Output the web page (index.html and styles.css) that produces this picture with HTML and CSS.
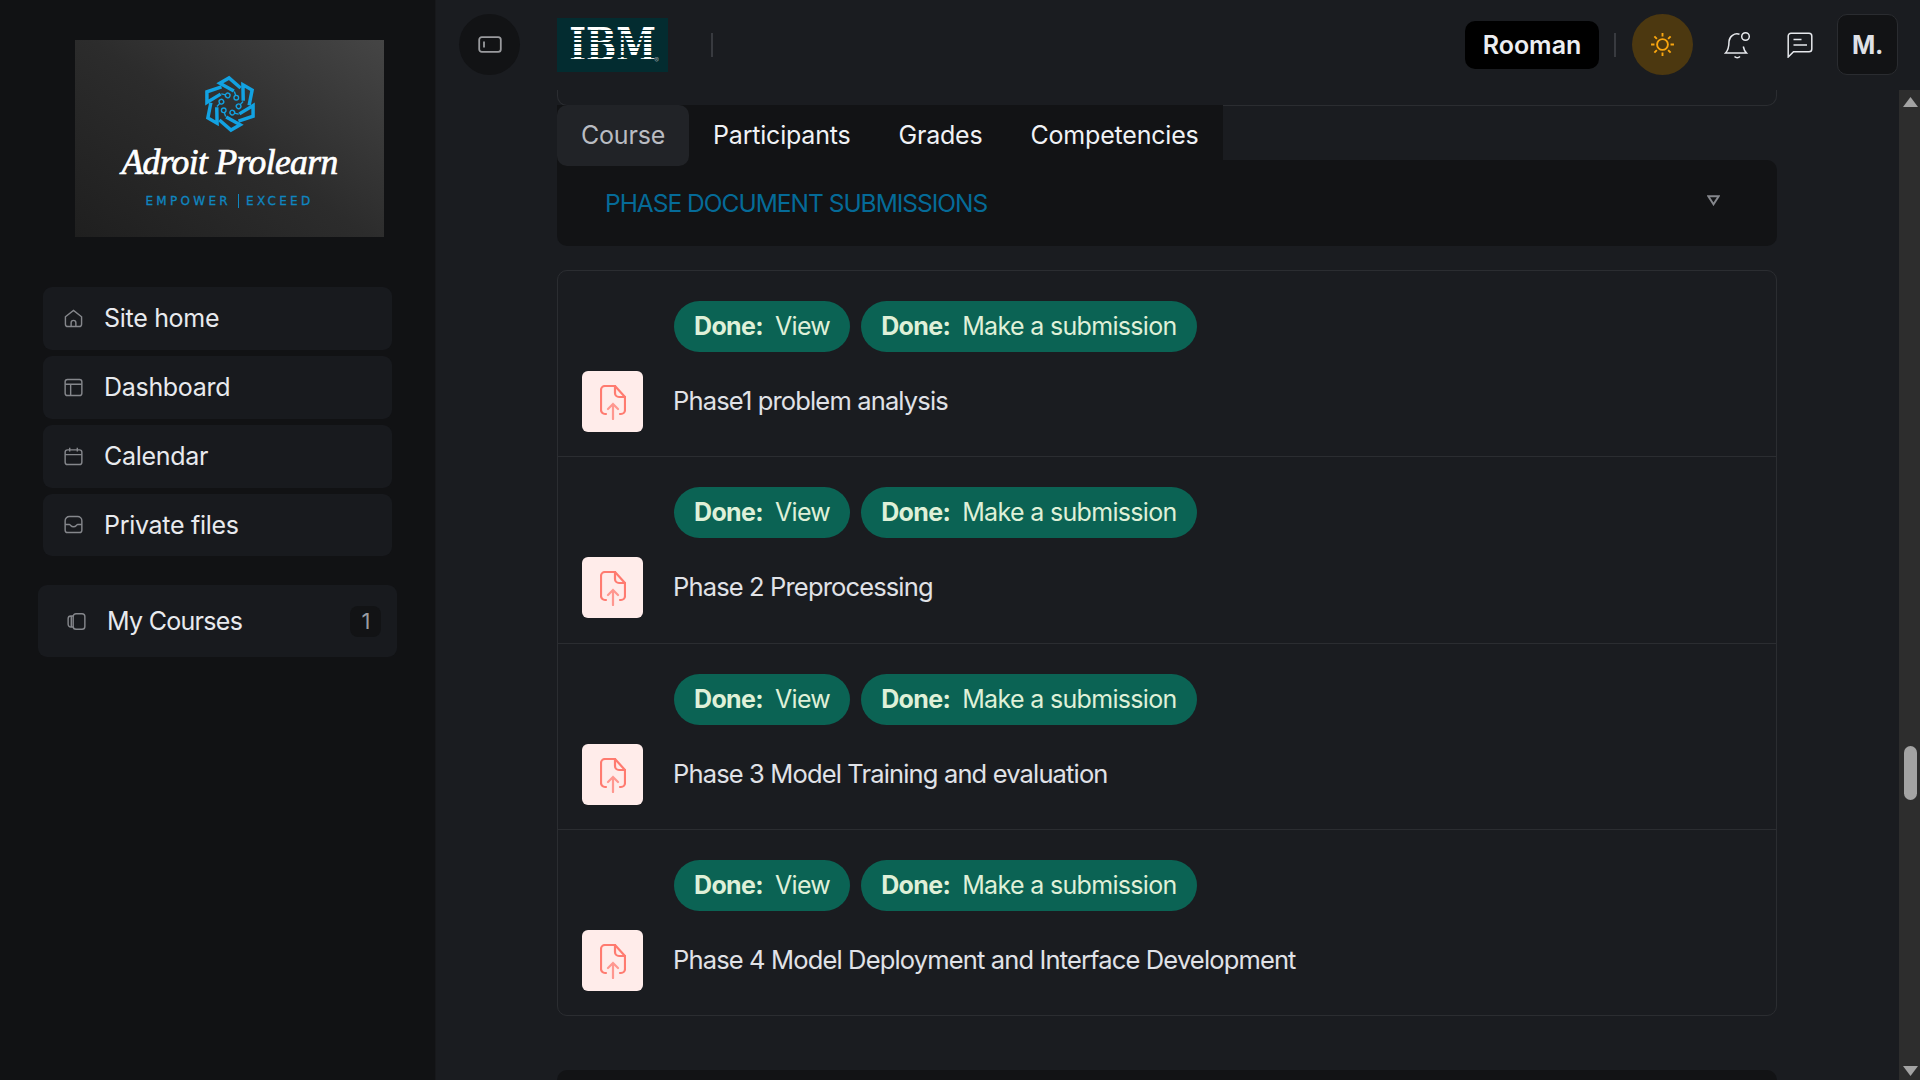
FILE: index.html
```html
<!DOCTYPE html>
<html lang="en">
<head>
<meta charset="utf-8">
<title>Course</title>
<link rel="stylesheet" href="styles.css">
</head>
<body>
<svg class="sprites" width="0" height="0">
  <defs>
    <g id="arm">
      <path d="M11 -16.500 L-1 -27 L-10.500 -21.500 L4 -13.500" />
      <path d="M4.500 -13 L6 -8.500" class="thin"/>
      <circle cx="6.500" cy="-6.500" r="2.400" class="thin"/>
    </g>
    <symbol id="upload" viewBox="0 0 26 35">
      <path d="M6 29H5a4 4 0 0 1-4-4V5a4 4 0 0 1 4-4h10l10 11v13a4 4 0 0 1-4 4h-1" />
      <path d="M15 1v7a4 4 0 0 0 4 4h6" />
      <path d="M13 34V19M8 24l5-5 5 5" stroke-opacity=".75"/>
    </symbol>
  </defs>
</svg>
<aside class="sidebar">
  <div class="brand">
    <svg class="brand-mark" viewBox="-30 -30 60 60" aria-hidden="true">
      <use href="#arm"/>
      <use href="#arm" transform="rotate(60)"/>
      <use href="#arm" transform="rotate(120)"/>
      <use href="#arm" transform="rotate(180)"/>
      <use href="#arm" transform="rotate(240)"/>
      <use href="#arm" transform="rotate(300)"/>
    </svg>
    <div class="brand-name">Adroit Prolearn</div>
    <div class="brand-tag"><span>EMPOWER</span><i></i><span>EXCEED</span></div>
  </div>
  <nav class="nav">
    <a class="nav-item">
      <svg class="nav-icon" viewBox="0 0 20 20"><path d="M1.500 8.200 10 1.500l8.500 6.700V16a2.500 2.500 0 0 1-2.500 2.500H4A2.500 2.500 0 0 1 1.500 16z"/><path d="M7.500 18.500v-4a2.500 2.500 0 0 1 5 0v4"/></svg>
      <span>Site home</span>
    </a>
    <a class="nav-item">
      <svg class="nav-icon" viewBox="0 0 20 20"><rect x="1.200" y="1.500" width="17.600" height="17" rx="2.500"/><path d="M1.200 6.500h17.600M7 6.500v12"/></svg>
      <span>Dashboard</span>
    </a>
    <a class="nav-item">
      <svg class="nav-icon" viewBox="0 0 20 20"><rect x="1.200" y="3" width="17.600" height="15.500" rx="2.500"/><path d="M1.200 8h17.600M6 .8v4M14 .8v4"/></svg>
      <span>Calendar</span>
    </a>
    <a class="nav-item">
      <svg class="nav-icon" viewBox="0 0 20 20"><path d="M1.200 10V6a4.500 4.500 0 0 1 4.500-4.500h8.600A4.500 4.500 0 0 1 18.800 6v10a2.500 2.500 0 0 1-2.500 2.500H3.700A2.500 2.500 0 0 1 1.200 16z"/><path d="M1.200 10h4.300c.8 0 1 .5 1.500 1 .8.900 1.800 1.400 3 1.400s2.200-.5 3-1.400c.5-.5.7-1 1.500-1h4.300"/></svg>
      <span>Private files</span>
    </a>
  </nav>
  <a class="courses">
    <svg class="nav-icon" viewBox="0 0 20 20"><rect x="6.500" y="1.800" width="12.300" height="16.400" rx="3"/><path d="M6.500 4.200H4A2.800 2.800 0 0 0 1.200 7v6A2.800 2.800 0 0 0 4 15.800h2.500M4.500 4.500v11"/></svg>
    <span class="courses-label">My Courses</span>
    <span class="badge">1</span>
  </a>
</aside>

<div class="shell">
  <header class="topbar">
    <button class="round-btn">
      <svg class="toggle-icon" viewBox="0 0 24 17"><rect x="1.200" y="1.200" width="21.600" height="14.600" rx="2.600"/><path d="M6 5.500v6"/></svg>
    </button>
    <div class="ibm"><span class="ibm-word">IBM</span><span class="ibm-reg">®</span></div>
    <span class="rule rule-a"></span>
    <div class="spacer"></div>
    <button class="user-btn">Rooman</button>
    <span class="rule rule-b"></span>
    <button class="round-btn sun-btn">
      <svg class="sun-icon" viewBox="0 0 24 24"><circle cx="12" cy="12" r="5.200"/><path d="M12 1v3.300M12 19.700V23M1 12h3.300M19.700 12H23M4.200 4.200l2.400 2.400M17.400 17.400l2.400 2.400M4.200 19.800l2.400-2.400M17.400 6.600l2.400-2.400"/></svg>
    </button>
    <svg class="bell-icon" viewBox="0 0 27 28"><path d="M15.500 3.300A8 8 0 0 0 5 10.500c0 6-1 9-3.500 11.500h21c-1.700-1.800-2.700-3.700-3.200-6.500"/><path d="M10.500 25.500c1.500 1.600 4 1.600 5.500 0"/><circle cx="21.500" cy="5.500" r="3.800"/></svg>
    <svg class="chat-icon" viewBox="0 0 26 26"><path d="M1.200 25V4A2.800 2.800 0 0 1 4 1.200h18A2.800 2.800 0 0 1 24.800 4v13a2.800 2.800 0 0 1-2.800 2.800H6.500z"/><path d="M6.500 7.500h8M6.500 13h13.500"/></svg>
    <button class="avatar">M.</button>
  </header>

  <div class="below">
    <main class="main">
      <div class="stub"></div>
      <div class="tabs">
        <a class="tab tab-active">Course</a>
        <a class="tab">Participants</a>
        <a class="tab">Grades</a>
        <a class="tab">Competencies</a>
      </div>
      <section class="section-bar">
        <h3 class="section-title">PHASE DOCUMENT SUBMISSIONS</h3>
        <svg class="section-caret" viewBox="0 0 12 10"><path d="M1.200 1h9.600L6 8.500z"/></svg>
      </section>
      <ul class="activities">
        <li class="activity">
          <div class="pills">
            <span class="pill"><b>Done:</b><span>View</span></span>
            <span class="pill"><b>Done:</b><span>Make a submission</span></span>
          </div>
          <div class="activity-main">
            <span class="file-tile"><svg class="file-icon"><use href="#upload"/></svg></span>
            <span class="activity-name">Phase1 problem analysis</span>
          </div>
        </li>
        <li class="activity">
          <div class="pills">
            <span class="pill"><b>Done:</b><span>View</span></span>
            <span class="pill"><b>Done:</b><span>Make a submission</span></span>
          </div>
          <div class="activity-main">
            <span class="file-tile"><svg class="file-icon"><use href="#upload"/></svg></span>
            <span class="activity-name">Phase 2 Preprocessing</span>
          </div>
        </li>
        <li class="activity">
          <div class="pills">
            <span class="pill"><b>Done:</b><span>View</span></span>
            <span class="pill"><b>Done:</b><span>Make a submission</span></span>
          </div>
          <div class="activity-main">
            <span class="file-tile"><svg class="file-icon"><use href="#upload"/></svg></span>
            <span class="activity-name">Phase 3 Model Training and evaluation</span>
          </div>
        </li>
        <li class="activity">
          <div class="pills">
            <span class="pill"><b>Done:</b><span>View</span></span>
            <span class="pill"><b>Done:</b><span>Make a submission</span></span>
          </div>
          <div class="activity-main">
            <span class="file-tile"><svg class="file-icon"><use href="#upload"/></svg></span>
            <span class="activity-name">Phase 4 Model Deployment and Interface Development</span>
          </div>
        </li>
      </ul>
      <div class="next-section"></div>
    </main>
    <div class="scrollbar">
      <svg class="arrow" viewBox="0 0 15 10"><path d="M7.500 0 15 10H0z"/></svg>
      <div class="thumb"></div>
      <svg class="arrow arrow-down" viewBox="0 0 15 10"><path d="M0 0h15L7.500 10z"/></svg>
    </div>
  </div>
</div>
</body>
</html>
```
FILE: styles.css
```css
* { box-sizing: border-box; }
html, body { height: 100%; }
body {
  margin: 0;
  display: flex;
  height: 1080px;
  overflow: hidden;
  background: #1a1c20;
  color: #e6e8ec;
  font-family: Inter, "Noto Sans", sans-serif;
  font-size: 25px;
  letter-spacing: -0.3px;
}
.sprites { display: block; width: 0; height: 0; }
#arm, #arm * { fill: none; stroke: #12a2e2; stroke-width: 3.600; stroke-linejoin: miter; }
.thin { stroke-width: 1.400 !important; }

/* sidebar */
.sidebar {
  width: 436px;
  flex: none;
  background: #111214;
  border-right: 1px solid #17181b;
  padding: 40px 38px 0;
  display: flex;
  flex-direction: column;
}
.brand {
  width: 309px;
  height: 197px;
  margin-left: 37px;
  background: linear-gradient(35deg, #1f1f1f 0%, #2c2c2c 50%, #454545 100%);
  display: flex;
  flex-direction: column;
  align-items: center;
  padding-top: 34px;
}
.brand-mark { width: 58px; height: 60px; display: block; margin-left: 1px; }
.brand-name {
  font-family: "Liberation Serif", serif;
  font-style: italic;
  font-size: 35.500px;
  line-height: 44px;
  letter-spacing: -0.6px;
  color: #fff;
  -webkit-text-stroke: 0.7px #fff;
  margin-top: 6px;
  white-space: nowrap;
}
.brand-tag {
  display: flex;
  align-items: center;
  gap: 7px;
  margin-top: 10px;
  font-family: "DejaVu Sans", sans-serif;
  font-size: 12px;
  font-weight: 400;
  -webkit-text-stroke: 0.3px #0f86c0;
  letter-spacing: 3.300px;
  color: #0f86c0;
  line-height: 14px;
}
.brand-tag i { width: 1px; height: 14px; background: #0f86c0; }
.nav {
  margin: 50px 5px 0;
  display: flex;
  flex-direction: column;
  gap: 6px;
}
.nav-item {
  height: 63px;
  background: #181a1e;
  border-radius: 9px;
  display: flex;
  align-items: center;
  padding: 0 0 1px 21px;
  gap: 21px;
  color: #e8eaee;
}
.nav-item:last-child { height: 62px; }
.nav-icon {
  width: 19px;
  height: 19px;
  flex: none;
  fill: none;
  stroke: #85878c;
  stroke-width: 1.500;
}
.courses {
  height: 72px;
  margin-top: 29px;
  background: #181a1e;
  border-radius: 9px;
  display: flex;
  align-items: center;
  padding: 0 16px 0 29px;
  gap: 21px;
  color: #e8eaee;
  letter-spacing: -0.7px;
}
.courses-label { flex: 1; }
.badge {
  width: 31px;
  height: 31px;
  border-radius: 8px;
  background: #121315;
  color: #9a9ca1;
  display: flex;
  align-items: center;
  justify-content: center;
  font-size: 22px;
}

/* top bar */
.shell { flex: 1; min-width: 0; display: flex; flex-direction: column; }
.topbar {
  height: 90px;
  flex: none;
  display: flex;
  align-items: center;
  padding: 0 22px 1px 23px;
}
button { font: inherit; border: 0; padding: 0; color: inherit; letter-spacing: inherit; }
.round-btn {
  width: 61px;
  height: 61px;
  border-radius: 50%;
  background: #121315;
  display: flex;
  align-items: center;
  justify-content: center;
  flex: none;
}
.toggle-icon { width: 24px; height: 17px; fill: none; stroke: #9a9b9e; stroke-width: 1.800; }
.ibm {
  width: 111px;
  height: 54px;
  margin-left: 37px;
  background: #032c30;
  display: flex;
  align-items: center;
  justify-content: center;
  position: relative;
}
.ibm-word {
  font-family: "DejaVu Serif", serif;
  font-weight: 700;
  font-size: 46px;
  letter-spacing: 0;
  line-height: 36px;
  color: #fff;
  display: block;
  position: relative;
  transform: scaleX(.78);
}
.ibm-word::after {
  content: "";
  position: absolute;
  inset: 0;
  background: repeating-linear-gradient(to bottom, transparent 0 2.600px, #032c30 2.600px 4.250px);
}
.ibm-reg {
  position: absolute;
  right: 9px;
  bottom: 7px;
  font-size: 7px;
  line-height: 8px;
  letter-spacing: 0;
  color: #8a9a9c;
}
.rule { width: 2px; height: 24px; background: #383a3f; flex: none; }
.rule-a { margin-left: 43px; }
.spacer { flex: 1; }
.user-btn {
  width: 134px;
  height: 48px;
  background: #000;
  border-radius: 10px;
  font-weight: 600;
  color: #eceef2;
  letter-spacing: 0;
}
.rule-b { margin: 0 16px 0 15px; }
.sun-btn { background: #4c3810; }
.sun-icon { width: 25px; height: 25px; fill: none; stroke: #f9a60f; stroke-width: 1.800; }
.bell-icon { width: 27px; height: 28px; margin-left: 31px; fill: none; stroke: #e6e8ec; stroke-width: 1.500; flex: none; }
.chat-icon { width: 26px; height: 26px; margin-left: 36px; fill: none; stroke: #e6e8ec; stroke-width: 1.500; flex: none; }
.avatar {
  width: 61px;
  height: 61px;
  margin-left: 24px;
  border-radius: 10px;
  background: #121315;
  border: 1px solid #2a2c30;
  font-weight: 700;
  font-size: 25px;
  color: #dfe1e6;
}

/* main */
.below { flex: 1; min-height: 0; display: flex; }
.main {
  flex: 1;
  min-width: 0;
  padding: 0 122px 0 121px;
  overflow: hidden;
}
.stub {
  height: 16px;
  border: 1px solid #2b2d31;
  border-top: 0;
  border-radius: 0 0 10px 10px;
}
.tabs {
  display: flex;
  width: 666px;
  height: 61px;
  margin-top: -1px;
  margin-bottom: -6px;
  background: #121315;
  position: relative;
  letter-spacing: -0.2px;
}
.tab {
  padding: 0 24px 1px;
  display: flex;
  align-items: center;
  color: #f0f2f5;
  border-radius: 10px;
  white-space: nowrap;
}
.tab-active { background: #212327; color: #b9bcc2; }
.section-bar {
  height: 86px;
  background: #121315;
  border-radius: 0 10px 10px 10px;
  padding: 0 57px 0 48px;
  display: flex;
  align-items: center;
  justify-content: space-between;
}
.section-title {
  margin: 0;
  font-size: 24.500px;
  font-weight: 400;
  letter-spacing: -1px;
  color: #056b98;
}
.section-caret { width: 13px; height: 11px; margin-bottom: 6px; fill: none; stroke: #85878c; stroke-width: 1.800; }
.activities {
  list-style: none;
  margin: 24px 0 0;
  padding: 0;
  border: 1px solid #2b2d31;
  border-radius: 10px;
}
.activity { height: 186.500px; padding: 30px 24px 0; }
.activity:first-child { height: 185px; }
.activity:last-child { height: 186px; }
.activity + .activity { border-top: 1px solid #2b2d31; }
.pills { display: flex; gap: 11px; margin-left: 92px; }
.pill {
  height: 51px;
  border-radius: 26px;
  background: #0b6354;
  color: #dff0d8;
  display: flex;
  align-items: center;
  gap: 12px;
  padding: 0 20px 1px;
  font-size: 25px;
  letter-spacing: -0.67px;
}
.pill b { font-weight: 700; letter-spacing: -0.65px; }
.activity-main { display: flex; align-items: center; gap: 30px; margin-top: 19px; }
.file-tile {
  width: 61px;
  height: 61px;
  flex: none;
  border-radius: 6px;
  background: #ffecea;
  display: flex;
  align-items: center;
  justify-content: center;
}
.file-icon { width: 26px; height: 35px; fill: none; stroke: #ff7b70; stroke-width: 2.200; stroke-linecap: round; margin-top: 2px; }
.activity-name { color: #e0e2e7; font-size: 25.500px; letter-spacing: -0.85px; padding-bottom: 2px; }
.next-section { height: 60px; margin-top: 54px; background: #121315; border-radius: 10px; }

/* scrollbar */
.scrollbar {
  width: 21px;
  flex: none;
  background: #2d2d2d;
  display: flex;
  flex-direction: column;
  align-items: center;
  padding: 7px 0 4px 2px;
}
.arrow { width: 15px; height: 10px; fill: #a3a3a3; flex: none; }
.arrow-down { margin-top: auto; }
.thumb { width: 13px; height: 54px; margin-top: 639px; background: #a3a3a3; border-radius: 7px; }
```
